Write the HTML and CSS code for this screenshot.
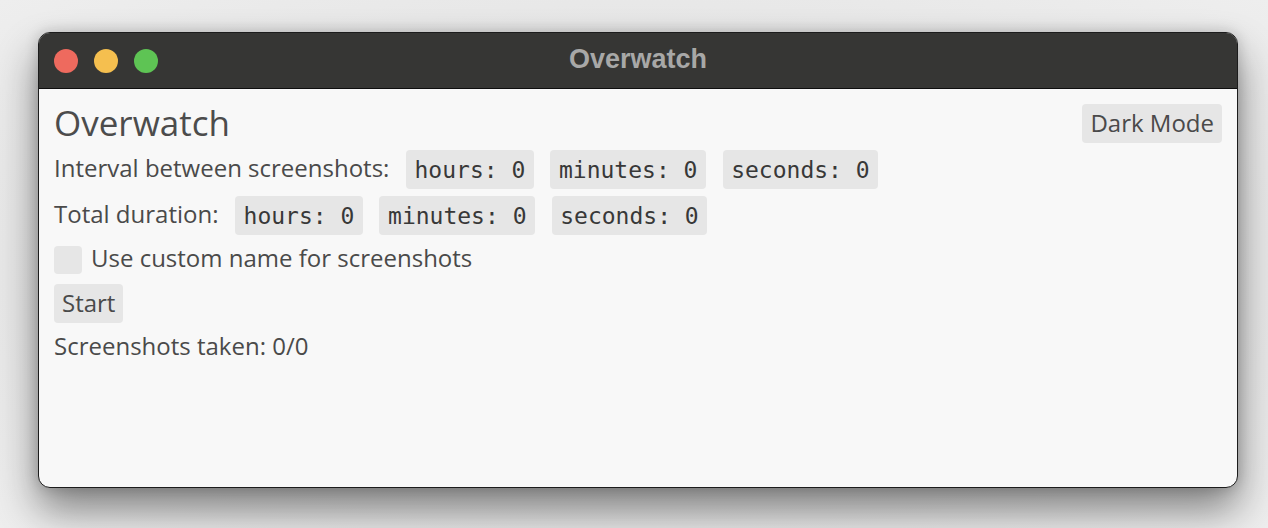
FILE: index.html
```html
<!DOCTYPE html>
<html>
<head>
<meta charset="utf-8">
<link rel="stylesheet" href="styles.css">
</head>
<body>
<div class="window">
  <div class="titlebar">
    <div class="lights">
      <span class="light red"></span>
      <span class="light yellow"></span>
      <span class="light green"></span>
    </div>
    <div class="title">Overwatch</div>
  </div>
  <div class="content">
    <div class="row head-row">
      <h1 class="heading">Overwatch</h1>
      <button class="btn">Dark Mode</button>
    </div>
    <div class="row">
      <span class="label">Interval between screenshots:</span>
      <span class="field">hours: 0</span>
      <span class="field">minutes: 0</span>
      <span class="field">seconds: 0</span>
    </div>
    <div class="row">
      <span class="label">Total duration:</span>
      <span class="field">hours: 0</span>
      <span class="field">minutes: 0</span>
      <span class="field">seconds: 0</span>
    </div>
    <div class="row check-row">
      <span class="checkbox"></span>
      <span class="label">Use custom name for screenshots</span>
    </div>
    <div class="row start-row">
      <button class="btn">Start</button>
    </div>
    <div class="row text-row">
      <span class="label">Screenshots taken: 0/0</span>
    </div>
  </div>
</div>
</body>
</html>
```
FILE: styles.css
```css
html, body {
  margin: 0;
  padding: 0;
}
body {
  width: 1268px;
  height: 528px;
  background: radial-gradient(ellipse at 50% 50%, #d0d0d0 0%, #e6e6e6 60%, #eeeeee 100%);
  overflow: hidden;
  padding: 32px 0 0 38px;
  box-sizing: border-box;
}
.window {
  width: 1200px;
  height: 456px;
  border-radius: 12px;
  border: 1px solid #1c1c1c;
  box-sizing: border-box;
  background: #f8f8f8;
  overflow: hidden;
  box-shadow: 0 22px 40px rgba(0,0,0,0.45), 0 0 14px rgba(0,0,0,0.18);
  display: flex;
  flex-direction: column;
}
.titlebar {
  height: 55px;
  background: #363634;
  border-bottom: 1px solid #0e0e0e;
  display: flex;
  align-items: center;
  position: relative;
  flex-shrink: 0;
}
.lights {
  display: flex;
  gap: 16px;
  padding-left: 15px;
}
.light {
  width: 24px;
  height: 24px;
  border-radius: 50%;
  display: block;
}
.red { background: #ee6a5e; }
.yellow { background: #f5bf4f; }
.green { background: #5ec454; }
.title {
  position: absolute;
  left: 0;
  right: 0;
  top: 0;
  bottom: 0;
  display: flex;
  align-items: center;
  justify-content: center;
  font-family: "Liberation Sans", Arial, sans-serif;
  font-weight: bold;
  font-size: 27px;
  color: #a8a8a7;
  padding-bottom: 2px;
}
.content {
  padding: 15px 15px 0 15px;
  font-family: "Open Sans", sans-serif;
  color: #4a4a4a;
  display: flex;
  flex-direction: column;
  gap: 7px;
}
.row {
  display: flex;
  align-items: center;
  gap: 16.5px;
  height: 39px;
}
.head-row {
  justify-content: space-between;
}
.heading {
  margin: 0;
  font-weight: normal;
  font-size: 35px;
  line-height: 39px;
  color: #4c4c4c;
  padding-bottom: 2px;
}
.label {
  font-size: 24px;
  line-height: 30px;
  white-space: nowrap;
  padding-bottom: 4px;
}
.btn {
  font-family: "Open Sans", sans-serif;
  font-size: 24px;
  color: #4a4a4a;
  background: #e6e6e6;
  border: none;
  border-radius: 4px;
  height: 39px;
  padding: 0 8px 3px;
  margin: 0;
}
.field {
  font-family: "DejaVu Sans Mono", monospace;
  font-size: 23px;
  color: #383838;
  background: #e6e6e6;
  border-radius: 4px;
  height: 39px;
  padding: 0 8.6px;
  display: flex;
  align-items: center;
}
.check-row {
  gap: 9px;
  margin-top: 4px;
  height: 28px;
}
.checkbox {
  width: 28px;
  height: 28px;
  border-radius: 4px;
  background: #e6e6e6;
  display: block;
}
.start-row {
  margin-top: 3px;
}
.text-row {
  height: 36px;
}
```
